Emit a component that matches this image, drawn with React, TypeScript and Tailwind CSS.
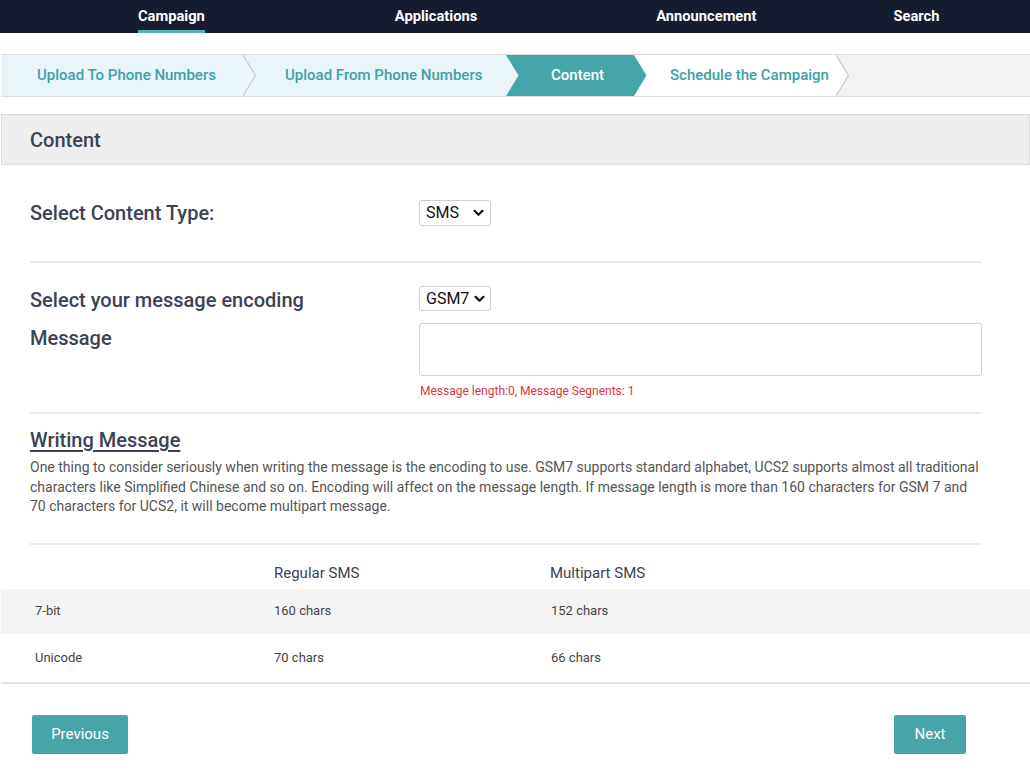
import React from "react";

const F = { fontFamily: "Roboto, 'Liberation Sans', sans-serif" };

function Arrow({ from, to, line }: { from: string; to: string; line?: boolean }) {
  return (
    <svg width="13" height="41" viewBox="0 0 13 41" className="shrink-0 block">
      <rect x="0" y="0" width="13" height="41" fill={to} />
      <polygon points="0,0 12.5,20.5 0,41" fill={from} />
      {line && <polyline points="0,0 12.5,20.5 0,41" fill="none" stroke="#c9c9c9" strokeWidth="1.2" />}
    </svg>
  );
}

function Chevron() {
  return (
    <svg width="11" height="8" viewBox="0 0 11 8" className="block">
      <polyline points="1.5,1.8 5.5,5.8 9.5,1.8" fill="none" stroke="#111" strokeWidth="2.2" strokeLinecap="round" strokeLinejoin="round" />
    </svg>
  );
}

export default function App() {
  return (
    <div style={F} className="w-[1030px] h-[780px] bg-white overflow-hidden">
      {/* top nav */}
      <div className="h-[33px] bg-[#161c30] flex items-stretch text-white text-[14.7px] font-bold">
        <div className="ml-[138px] relative flex items-center">
          Campaign
          <div className="absolute left-0 right-0 bottom-0 h-[3px] bg-[#4fb3b3]" />
        </div>
        <div className="ml-[190px] flex items-center">Applications</div>
        <div className="ml-[179px] flex items-center">Announcement</div>
        <div className="ml-[137px] flex items-center">Search</div>
      </div>

      {/* breadcrumb */}
      <div className="mt-[21px] ml-[1px] flex h-[43px] border-y border-[#dcdcdc] bg-[#f2f2f2] text-[15px] font-medium">
        <div className="w-[242px] bg-[#eaf5fa] text-[#3ba2a7] flex items-center pl-[36px]">Upload To Phone Numbers</div>
        <Arrow from="#eaf5fa" to="#eaf5fa" line />
        <div className="w-[250px] bg-[#eaf5fa] text-[#3ba2a7] flex items-center pl-[29px]">Upload From Phone Numbers</div>
        <Arrow from="#eaf5fa" to="#46a5aa" />
        <div className="w-[115px] bg-[#46a5aa] text-white flex items-center pl-[32px]">Content</div>
        <Arrow from="#46a5aa" to="#ffffff" />
        <div className="w-[189px] bg-white text-[#3ba2a7] flex items-center pl-[23px]">Schedule the Campaign</div>
        <Arrow from="#ffffff" to="#f2f2f2" line />
      </div>

      {/* section header */}
      <div className="mt-[17px] ml-[1px] h-[51px] bg-[#eeeeee] border border-[#dcdcdc] flex items-center pl-[28px] text-[20px] font-medium text-[#3c4254]">
        Content
      </div>

      {/* form */}
      <div className="ml-[30px] w-[952px]">
        <div className="mt-[35px] flex items-center h-[26px]">
          <div className="w-[389px] text-[20px] font-medium text-[#3c4254]">Select Content Type:</div>
          <div className="w-[72px] h-[26px] border border-[#cfcfcf] rounded-[3px] flex items-center pl-[6px] pr-[6px] justify-between text-[16px] text-[#111]">
            <span>SMS</span>
            <Chevron />
          </div>
        </div>
        <div className="mt-[35px] h-[2px] bg-[#ececec]" />
        <div className="mt-[23px] flex items-center h-[25px]">
          <div className="w-[389px] text-[20px] font-medium text-[#3c4254] pt-[3px]">Select your message encoding</div>
          <div className="w-[72px] h-[25px] border border-[#cfcfcf] rounded-[3px] flex items-center pl-[6px] pr-[5px] justify-between text-[16px] text-[#111]">
            <span>GSM7</span>
            <Chevron />
          </div>
        </div>
        <div className="mt-[12px] flex">
          <div className="w-[389px] text-[20px] font-medium text-[#3c4254] leading-[28px] pt-[1px]">Message</div>
          <div className="flex-1">
            <div className="h-[53px] border border-[#d3d3d3] rounded-[3px]" />
            <div className="mt-[6px] text-[12px] text-[#d9383f] pl-[1px]">Message length:0, Message Segnents: 1</div>
          </div>
        </div>
        <div className="mt-[12px] h-[2px] bg-[#ececec]" />
      </div>

      <div className="ml-[30px] mr-[15px]">
        <div className="mt-[13px] text-[20px] font-medium text-[#3c4254] underline underline-offset-[3px] decoration-[1.5px] leading-[26px]">Writing Message</div>
        <p className="mt-[5px] text-[14px] leading-[19.5px] text-[#555]">
          One thing to consider seriously when writing the message is the encoding to use. GSM7 supports standard alphabet, UCS2 supports almost all traditional characters like Simplified Chinese and so on. Encoding will affect on the message length. If message length is more than 160 characters for GSM 7 and
          <br />
          70 characters for UCS2, it will become multipart message.
        </p>
      </div>
      <div className="ml-[30px] w-[952px] mt-[26px] h-[2px] bg-[#ececec]" />

      {/* table */}
      <div className="ml-[1px]">
        <div className="h-[44px] flex items-end pb-[4px] text-[15px] text-[#3c4254]">
          <div className="w-[273px]" />
          <div className="w-[276px]">Regular SMS</div>
          <div>Multipart SMS</div>
        </div>
        <div className="h-[45px] bg-[#f4f4f4] flex items-center text-[13px] text-[#444]">
          <div className="w-[273px] pl-[34px]">7-bit</div>
          <div className="w-[277px]">160 chars</div>
          <div>152 chars</div>
        </div>
        <div className="h-[50px] flex items-center text-[13px] text-[#444] border-b-2 border-[#e3e3e3]">
          <div className="w-[273px] pl-[34px]">Unicode</div>
          <div className="w-[277px]">70 chars</div>
          <div>66 chars</div>
        </div>
      </div>

      {/* buttons */}
      <div className="mt-[31px] flex justify-between pl-[32px] pr-[64px]">
        <button className="w-[96px] h-[39px] bg-[#47a5aa] rounded-[2px] text-white text-[15px]">Previous</button>
        <button className="w-[72px] h-[39px] bg-[#47a5aa] rounded-[2px] text-white text-[15px]">Next</button>
      </div>
    </div>
  );
}
